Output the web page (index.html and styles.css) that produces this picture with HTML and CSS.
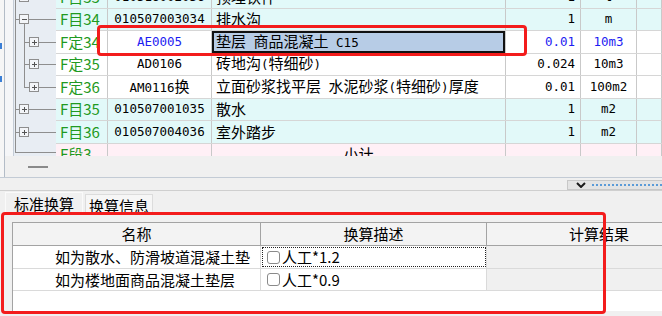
FILE: index.html
```html
<!DOCTYPE html>
<html lang="zh-CN">
<head>
    <meta charset="UTF-8">
    <title>定额换算</title>
    <link rel="stylesheet" href="styles.css">
</head>
<body>
<div class="top">
    <div class="gutter"><i class="mark"></i><i class="mark m2"></i></div>
    <div class="main">
        <div class="rows">
            <div class="tree">
                <svg width="42" height="156" viewBox="0 0 42 156" shape-rendering="crispEdges">
                    <g stroke="#8e8e8e" stroke-width="1" fill="none">
                        <!-- main trunk -->
                        <path d="M1.5 0 V152.5 H42"/>
                        <!-- F目33 (cut off) -->
                        <rect x="5.5" y="-7.5" width="9" height="9" fill="#f3f5f8"/>
                        <!-- F目34 -->
                        <path d="M1.5 19.5 H5.5 M14.5 19.5 H42"/>
                        <rect x="5.5" y="14.5" width="9" height="9" fill="#f3f5f8"/>
                        <!-- children of F目34 -->
                        <path d="M10.5 23.5 V87.5"/>
                        <path d="M10.5 42.5 H15.5 M24.5 42.5 H42"/>
                        <rect x="15.5" y="37.5" width="9" height="9" fill="#f3f5f8"/>
                        <path d="M10.5 64.5 H15.5 M24.5 64.5 H42"/>
                        <rect x="15.5" y="59.5" width="9" height="9" fill="#f3f5f8"/>
                        <path d="M10.5 87.5 H15.5 M24.5 87.5 H42"/>
                        <rect x="15.5" y="82.5" width="9" height="9" fill="#f3f5f8"/>
                        <!-- F目35 / F目36 -->
                        <path d="M1.5 109.5 H5.5 M14.5 109.5 H42"/>
                        <rect x="5.5" y="104.5" width="9" height="9" fill="#f3f5f8"/>
                        <path d="M1.5 132.5 H5.5 M14.5 132.5 H42"/>
                        <rect x="5.5" y="127.5" width="9" height="9" fill="#f3f5f8"/>
                    </g>
                    <g stroke="#555" stroke-width="1">
                        <path d="M7.5 19.5 H12.5"/>
                        <path d="M17.5 42.5 H22.5 M20 40 V45"/>
                        <path d="M17.5 64.5 H22.5 M20 62 V67"/>
                        <path d="M17.5 87.5 H22.5 M20 85 V90"/>
                        <path d="M7.5 109.5 H12.5 M10 107 V112"/>
                        <path d="M7.5 132.5 H12.5 M10 130 V135"/>
                    </g>
                </svg>
            </div>
            <div class="cells">
                <div class="row cyan">
                    <div class="f">F目33</div>
                    <div class="code n">010516002036</div>
                    <div class="name">预埋铁件</div>
                    <div class="qty n">1</div>
                    <div class="unit n">t</div>
                    <div></div>
                </div>
                <div class="row cyan">
                    <div class="f">F目34</div>
                    <div class="code n">010507003034</div>
                    <div class="name">排水沟</div>
                    <div class="qty n">1</div>
                    <div class="unit n">m</div>
                    <div></div>
                </div>
                <div class="row white">
                    <div class="f">F定34</div>
                    <div class="code n blue">AE0005</div>
                    <div class="name sel"><span>垫层<span class="n">&nbsp;</span>商品混凝土<span class="n">&nbsp;C15</span></span></div>
                    <div class="qty n blue">0.01</div>
                    <div class="unit n blue">10m3</div>
                    <div></div>
                </div>
                <div class="row white">
                    <div class="f">F定35</div>
                    <div class="code n">AD0106</div>
                    <div class="name"><span>砖地沟<span class="n">(</span>特细砂<span class="n">)</span></span></div>
                    <div class="qty n">0.024</div>
                    <div class="unit n">10m3</div>
                    <div></div>
                </div>
                <div class="row white">
                    <div class="f">F定36</div>
                    <div class="code"><span><span class="n">AM0116</span>换</span></div>
                    <div class="name"><span>立面砂浆找平层<span class="n">&nbsp;</span>水泥砂浆<span class="n">(</span>特细砂<span class="n">)</span>厚度</span></div>
                    <div class="qty n">0.01</div>
                    <div class="unit n">100m2</div>
                    <div></div>
                </div>
                <div class="row cyan">
                    <div class="f">F目35</div>
                    <div class="code n">010507001035</div>
                    <div class="name">散水</div>
                    <div class="qty n">1</div>
                    <div class="unit n">m2</div>
                    <div></div>
                </div>
                <div class="row cyan">
                    <div class="f">F目36</div>
                    <div class="code n">010507004036</div>
                    <div class="name">室外踏步</div>
                    <div class="qty n">1</div>
                    <div class="unit n">m2</div>
                    <div></div>
                </div>
                <div class="row pink">
                    <div class="f">F段3</div>
                    <div class="code"></div>
                    <div class="name total">小计</div>
                    <div class="qty"></div>
                    <div class="unit"></div>
                    <div></div>
                </div>
            </div>
        </div>
        <div class="foot"><span class="dash"></span></div>
    </div>
</div>
<div class="hbar">
    <div class="drop">
        <svg width="10" height="6" viewBox="0 0 10 6"><path d="M1 1 L5 5 L9 1" stroke="#1a1a1a" stroke-width="2" fill="none"/></svg>
        <span class="dots"></span>
    </div>
</div>
<div class="tabs">
    <div class="tab on">标准换算</div>
    <div class="tab">换算信息</div>
</div>
<div class="panel">
    <div class="ctable">
        <div class="crow chead">
            <div>名称</div>
            <div>换算描述</div>
            <div>计算结果</div>
        </div>
        <div class="crow">
            <div class="cname">如为散水、防滑坡道混凝土垫</div>
            <div class="cdesc focus"><span class="cb"></span>人工*1.2</div>
            <div class="cres"></div>
        </div>
        <div class="crow short">
            <div class="cname">如为楼地面商品混凝土垫层</div>
            <div class="cdesc"><span class="cb"></span>人工*0.9</div>
            <div class="cres"></div>
        </div>
    </div>
</div>

<div class="hl hl1"></div>
<div class="hl hl2"></div>
</body>
</html>
```

FILE: styles.css
```css
* {
    box-sizing: border-box;
}

body {
    margin: 0;
    width: 662px;
    height: 316px;
    overflow: hidden;
    position: relative;
    background-color: #f0f0f0;
    font-family: "Noto Sans CJK SC", sans-serif;
    font-size: 15px;
    color: #000;
}

.top {
    display: flex;
    height: 178px;
    border-bottom: 1px solid #c3cbd5;
}

.gutter {
    width: 5px;
    border-right: 1px solid #b3bcc7;
    background-color: #f6f6f6;
    padding-top: 43px;
}

.mark {
    display: block;
    width: 2px;
    height: 6px;
    background-color: #3b7fd6;
}

.mark.m2 {
    margin-top: 27px;
}

.main {
    flex: 1;
    min-width: 0;
    display: flex;
    flex-direction: column;
}

.rows {
    height: 156px;
    display: flex;
    overflow: hidden;
    padding-left: 8px;
    background-color: #f5f6f8;
}

.tree {
    width: 43px;
    flex: none;
    background-color: #e8edf3;
    border-left: 1px solid #c4ccd6;
}

.tree svg {
    display: block;
}

.cells {
    flex: 1;
    min-width: 0;
    margin-top: -14px;
}

.row {
    display: grid;
    grid-template-columns: 52px 104px 294px 75px 56px 1fr;
    height: 22.5px;
    border-bottom: 1px solid #d6d6d6;
}

.row > div {
    display: flex;
    align-items: center;
    padding: 0 4px;
    border-right: 1px solid #c9c9c9;
    white-space: nowrap;
    overflow: hidden;
    line-height: 20px;
}

.cyan {
    background-color: #e2f9f9;
}

.white {
    background-color: #fff;
}

.pink {
    background-color: #fff0f6;
}

.row .f {
    color: #1f9a22;
    padding-left: 4px;
}

.row .code,
.row .unit,
.row .total {
    justify-content: center;
}

.row .qty {
    justify-content: flex-end;
    padding-right: 5px;
}

.n {
    font-family: "DejaVu Sans Mono", monospace;
    font-size: 12.5px;
}

.blue {
    color: #1c1cf2;
}

.row .sel {
    background-color: #b7cce6;
    box-shadow: inset 0 0 0 2px #111;
}

.foot {
    height: 21px;
    display: flex;
    align-items: center;
    padding-left: 23px;
}

.dash {
    width: 20px;
    height: 2px;
    background-color: #8a8a8a;
}

.hbar {
    height: 13px;
    display: flex;
    justify-content: flex-end;
    align-items: flex-start;
    border-bottom: 1px solid #cfcfcf;
}

.drop {
    margin-top: 2px;
    width: 95px;
    height: 10px;
    display: flex;
    align-items: center;
    gap: 6px;
    padding-left: 8px;
    background-color: #e4e4e4;
    border: 1px solid #c8c8c8;
    border-right: none;
}

.drop svg {
    flex: none;
}

.dots {
    flex: 1;
    border-top: 2px dotted #5b9bd8;
}

.tabs {
    height: 23px;
    display: flex;
    align-items: flex-end;
    padding-left: 5px;
}

.tab {
    width: 68px;
    height: 20px;
    display: flex;
    justify-content: center;
    align-items: center;
    padding-top: 3px;
    border: 1px solid #dcdcdc;
    border-bottom: none;
    background-color: #f6f6f6;
    line-height: 18px;
}

.tab.on {
    width: 78px;
    height: 22px;
    padding-top: 0;
    margin-right: 2px;
    background-color: #f0f0f0;
    border-color: #fafafa;
}

.panel {
    height: 102px;
    padding: 8px 0 0 12px;
}

.ctable {
    width: 700px;
    height: 89px;
    background-color: #fff;
    border-left: 1px solid #a3a3a3;
    border-top: 1px solid #a3a3a3;
}

.crow {
    display: grid;
    grid-template-columns: 248px 226px 1fr;
    height: 23px;
    border-bottom: 1px solid #dadada;
}

.crow.short {
    height: 22px;
}

.crow > div {
    display: flex;
    align-items: center;
    border-right: 1px solid #dadada;
    white-space: nowrap;
    line-height: 20px;
}

.chead {
    height: 23px;
    background-color: #f3f3f3;
    border-bottom-color: #a3a3a3;
}

.chead > div {
    justify-content: center;
    border-right-color: #a3a3a3;
}

.cname {
    padding-left: 42px;
}

.cdesc {
    padding-left: 6px;
}

.focus {
    outline: 1px dotted #222;
    outline-offset: -2px;
}

.cb {
    width: 13px;
    height: 13px;
    margin-right: 2px;
    border: 1px solid #8a8a8a;
    border-radius: 3px;
    background-color: #fff;
}

.crow .cres {
    background-color: #f0f0f0;
}

.hl {
    position: absolute;
    border: 3px solid #f31c1c;
    border-radius: 4px;
    pointer-events: none;
}

.hl1 {
    left: 97px;
    top: 25px;
    width: 430px;
    height: 31px;
}

.hl2 {
    left: 1px;
    top: 212px;
    width: 605px;
    height: 102px;
}
```
